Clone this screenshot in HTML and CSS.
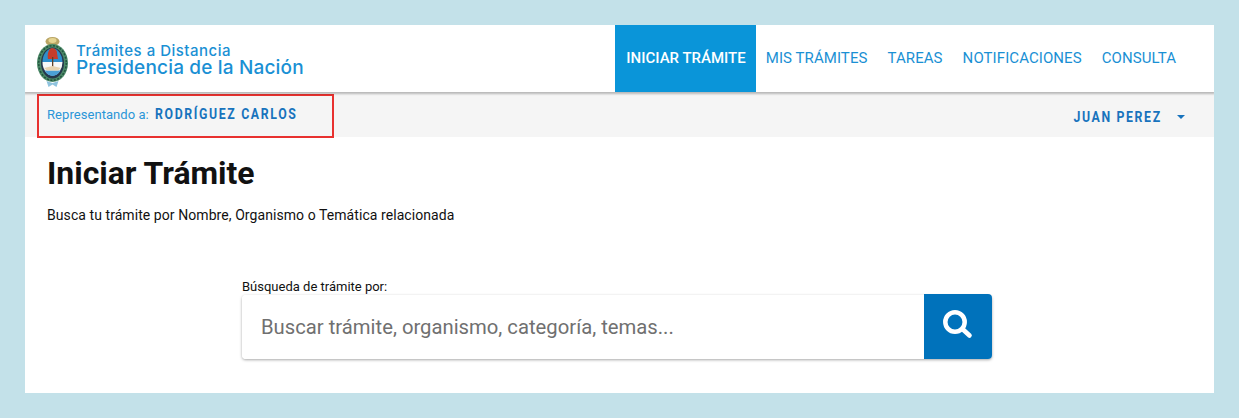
FILE: index.html
```html
<!DOCTYPE html>
<html lang="es">
<head>
    <meta charset="UTF-8">
    <title>Iniciar Trámite</title>
    <link rel="stylesheet" href="styles.css">
</head>
<body>
<div class="page">
    <header class="topbar">
        <div class="brand">
            <svg class="brand-logo" width="31" height="51" viewBox="0 0 31 51">
                <!-- sun and crown -->
                <ellipse cx="15.5" cy="4.5" rx="7" ry="4.5" fill="#b9a565"/>
                <ellipse cx="15.5" cy="3.5" rx="4" ry="2.4" fill="#e6d592"/>
                <!-- laurel ring -->
                <ellipse cx="15.5" cy="26" rx="15.5" ry="19" fill="#4c8a68"/>
                <ellipse cx="15.5" cy="26" rx="13.8" ry="17.3" fill="none" stroke="#22543f" stroke-width="1.6" stroke-dasharray="2 1.5"/>
                <ellipse cx="15.5" cy="26" rx="11.5" ry="15.5" fill="#26384d"/>
                <!-- shield -->
                <path d="M5.5 25a10 13.5 0 0 1 20 0z" fill="#2f8fcb"/>
                <path d="M5.5 25h20a10 13.5 0 0 1-20 0z" fill="#f7f8f8"/>
                <path d="M7.5 33.5h16a10 13.5 0 0 1-16 0z" fill="#4ba0d6"/>
                <!-- cap and pike -->
                <path d="M11 22c-.8-4 0-10 4-11 3 0 5.500 3 5 5l1 6z" fill="#c73d2a"/>
                <rect x="15" y="20" width="1.300" height="13" fill="#5d4128"/>
                <!-- hands -->
                <path d="M7 31l8.500-2 8.500 2-3 2.500h-11z" fill="#e6d3b0"/>
                <!-- ribbon -->
                <path d="M9.500 44l6 2 6-2-2 6-4-2.500-4 2.500z" fill="#8fc3de"/>
            </svg>
            <div class="brand-text">
                <span class="brand-top">Trámites a Distancia</span>
                <span class="brand-main">Presidencia de la Nación</span>
            </div>
        </div>
        <nav class="menu">
            <a class="menu-item active" href="#">INICIAR TRÁMITE</a>
            <a class="menu-item" href="#">MIS TRÁMITES</a>
            <a class="menu-item" href="#">TAREAS</a>
            <a class="menu-item" href="#">NOTIFICACIONES</a>
            <a class="menu-item" href="#">CONSULTA</a>
        </nav>
    </header>

    <div class="subbar">
        <div class="represent">
            <span class="represent-label">Representando a:</span>
            <span class="represent-name">RODRÍGUEZ CARLOS</span>
        </div>
        <div class="user">
            <span class="user-name">JUAN PEREZ</span>
            <span class="caret"></span>
        </div>
    </div>

    <main class="content">
        <h1>Iniciar Trámite</h1>
        <p class="lead">Busca tu trámite por Nombre, Organismo o Temática relacionada</p>

        <div class="search">
            <label class="search-label" for="q">Búsqueda de trámite por:</label>
            <div class="search-box">
                <input class="search-input" id="q" type="text" placeholder="Buscar trámite, organismo, categoría, temas...">
                <button class="search-btn" type="button" aria-label="Buscar">
                    <svg class="search-icon" width="30" height="30" viewBox="0 0 30 30" fill="none" stroke="#fff">
                        <circle cx="12" cy="12" r="9.700" stroke-width="4.500"/>
                        <path d="M20 19.500l6.500 6" stroke-width="4.600" stroke-linecap="round"/>
                    </svg>
                </button>
            </div>
        </div>
    </main>
</div>
</body>
</html>
```

FILE: styles.css
```css
html, body {
    margin: 0;
    padding: 0;
}

body {
    background-color: #c3e1e9;
    padding: 25px;
    font-family: 'Roboto', sans-serif;
    box-sizing: border-box;
    height: 418px;
    overflow: hidden;
}

.page {
    background-color: #fff;
    height: 368px;
    overflow: hidden;
}

/* Top bar */
.topbar {
    display: flex;
    justify-content: space-between;
    height: 67px;
    box-shadow: 0 1px 2px 1px rgba(0, 0, 0, 0.25);
    position: relative;
}

.brand {
    display: flex;
    align-items: center;
    padding-left: 12px;
    gap: 8px;
}

.brand-logo {
    margin-top: 7px;
    flex: none;
}

.brand-text {
    display: flex;
    flex-direction: column;
    color: #1a90d4;
    font-family: 'Inter', sans-serif;
    font-weight: 500;
    margin-top: 2px;
}

.brand-top {
    font-size: 15px;
    line-height: 15px;
    letter-spacing: 0.5px;
}

.brand-main {
    font-size: 19px;
    line-height: 19px;
    letter-spacing: 0.17px;
}

.menu {
    display: flex;
    padding-right: 28px;
}

.menu-item {
    display: flex;
    align-items: center;
    padding: 0 10px 2px;
    color: #1a90d4;
    font-size: 15px;
    letter-spacing: 0.08px;
    text-decoration: none;
}

.menu-item.active {
    background-color: #0a95d9;
    color: #fff;
    font-weight: 500;
    letter-spacing: 0;
    padding-left: 11px;
}

/* Sub bar */
.subbar {
    display: flex;
    justify-content: space-between;
    align-items: stretch;
    height: 45px;
    background-color: #f5f5f5;
    padding: 0 29px 0 12px;
}

.represent {
    display: flex;
    align-items: center;
    box-sizing: border-box;
    width: 297px;
    height: 44px;
    margin-top: 2px;
    padding: 0 0 4px 8px;
    border: 2px solid #e8312f;
    gap: 6px;
}

.represent-label {
    font-size: 13px;
    letter-spacing: 0.06px;
    color: #2a96d8;
}

/* no condensed Roboto installed, so squeeze the bold one */
.represent-name,
.user-name {
    display: inline-block;
    font-size: 15px;
    font-weight: 700;
    color: #1873bd;
    letter-spacing: 2px;
    transform: scaleX(0.82);
}

.represent-name {
    transform-origin: left center;
}

.user-name {
    transform-origin: right center;
}

.user {
    display: flex;
    align-items: center;
    gap: 15px;
    padding-top: 4px;
}

.caret {
    border-top: 4px solid #1873bd;
    border-left: 4px solid transparent;
    border-right: 4px solid transparent;
}

/* Content */
.content {
    padding: 0 22px;
}

h1 {
    margin: 0;
    padding-top: 18px;
    font-size: 31.9px;
    line-height: 36px;
    font-weight: 700;
    color: #111;
}

.lead {
    margin: 15px 0 0;
    font-size: 14px;
    line-height: 18px;
    letter-spacing: 0.07px;
    color: #111;
}

.search {
    width: 750px;
    margin: 56px auto 0 195px;
}

.search-label {
    display: block;
    font-size: 13px;
    line-height: 14px;
    color: #111;
}

.search-box {
    display: flex;
    height: 64px;
    margin-top: 1px;
    border-radius: 4px;
    box-shadow: 0 1px 3px rgba(0, 0, 0, 0.35);
}

.search-input {
    flex: 1;
    min-width: 0;
    border: none;
    outline: none;
    padding: 0 19px;
    font-family: inherit;
    font-size: 20.25px;
    background: #fff;
    border-radius: 4px 0 0 4px;
}

.search-input::placeholder {
    color: #707070;
    opacity: 1;
}

.search-btn {
    display: flex;
    align-items: center;
    justify-content: center;
    width: 68px;
    margin-top: -1px;
    border: none;
    background-color: #0072bb;
    border-radius: 0 4px 4px 0;
}

.search-icon {
    margin-bottom: 3px;
}
```
